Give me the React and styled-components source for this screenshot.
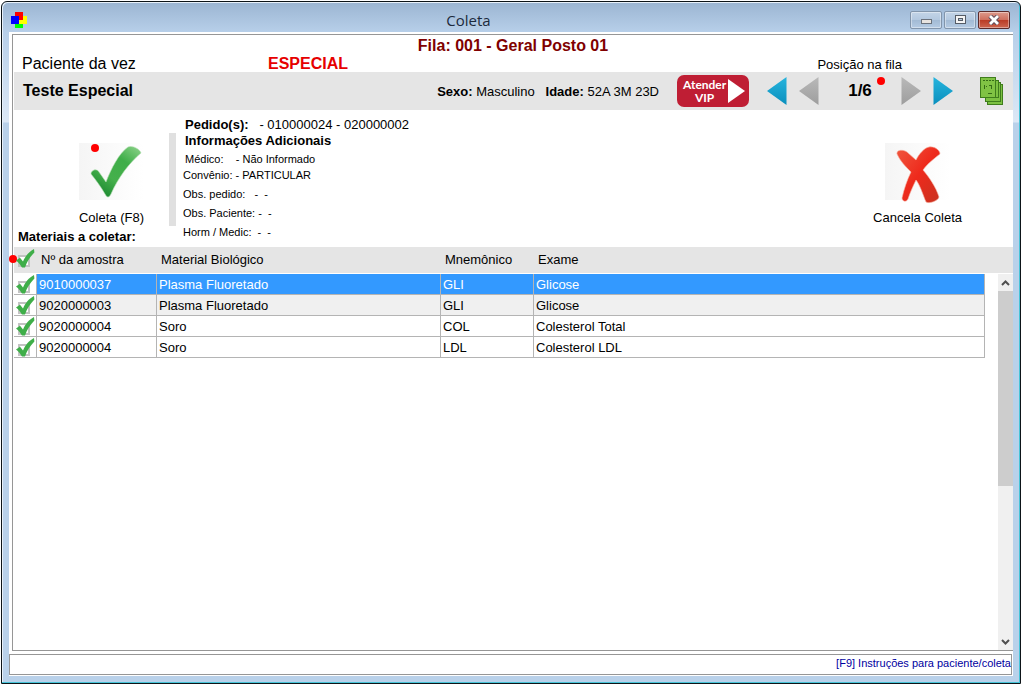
import React from 'react';
import { useState } from 'react';
import styled, { createGlobalStyle } from 'styled-components';

const exams = [
  { id: 1, sample: '9010000037', material: 'Plasma Fluoretado', code: 'GLI', exam: 'Glicose' },
  { id: 2, sample: '9020000003', material: 'Plasma Fluoretado', code: 'GLI', exam: 'Glicose', shaded: true },
  { id: 3, sample: '9020000004', material: 'Soro', code: 'COL', exam: 'Colesterol Total' },
  { id: 4, sample: '9020000004', material: 'Soro', code: 'LDL', exam: 'Colesterol LDL' },
];

function SampleCheck({ label, checked, onChange }) {
  return (
    <CheckLabel>
      <CheckInput
        type="checkbox"
        aria-label={label}
        checked={checked}
        onChange={onChange}
      />
      {checked && (
        <CheckMark viewBox="0 0 19 19" aria-hidden="true">
          <path
            d="M0 11.5 L4 8.8 L7 12.4 C9.5 7 12.5 3 18 0 L18.4 3.5 C14 8 11 12.5 9 18.6 L6 18.6 C4.5 16 2.5 13.5 0 11.5 Z"
            fill="#3fae49"
          />
        </CheckMark>
      )}
    </CheckLabel>
  );
}

function Arrow({ color, shade, dir, label }) {
  const id = `arrow-${label}`;
  return (
    <ArrowButton type="button" aria-label={label}>
      <svg width="20" height="28" viewBox="0 0 20 28">
        <defs>
          <linearGradient id={id} x1="0" y1="0" x2="0" y2="1">
            <stop offset="0" stopColor={color} />
            <stop offset="1" stopColor={shade} />
          </linearGradient>
        </defs>
        <path
          d={dir === 'left' ? 'M19.5 0 V28 L0 14 Z' : 'M0.5 0 V28 L20 14 Z'}
          fill={`url(#${id})`}
        />
      </svg>
    </ArrowButton>
  );
}

export default function App() {
  const [selected, setSelected] = useState(1);
  const [checked, setChecked] = useState([1, 2, 3, 4]);

  const toggle = (id) => {
    if (checked.includes(id)) {
      setChecked(checked.filter((el) => el !== id));
    } else {
      setChecked([...checked, id]);
    }
  };

  const allChecked = checked.length === exams.length;
  const toggleAll = () => {
    setChecked(allChecked ? [] : exams.map((el) => el.id));
  };

  return (
    <>
      <GlobalStyle />
      <Window>
        <TitleBar>
          <svg width="16" height="16" viewBox="0 0 16 16">
            <rect x="4" y="0" width="8" height="8" fill="#f00" />
            <rect x="8" y="4" width="8" height="8" fill="#ff0" />
            <rect x="4" y="8" width="8" height="8" fill="#0f0" />
            <rect x="0" y="4" width="8" height="8" fill="#00f" />
            <rect x="8" y="4" width="4" height="4" fill="#f00" />
            <rect x="8" y="8" width="4" height="4" fill="#ff0" />
          </svg>
          <Title>Coleta</Title>
          <WindowButtons>
            <WindowButton type="button" aria-label="Minimizar">
              <svg width="11" height="9" viewBox="0 0 11 9">
                <rect x="0.5" y="4.5" width="10" height="4" fill="#e8e4e0" stroke="#6b727c" />
              </svg>
            </WindowButton>
            <WindowButton type="button" aria-label="Maximizar">
              <svg width="11" height="9" viewBox="0 0 11 9">
                <rect x="0.5" y="0.5" width="10" height="8" fill="#f4f4f4" stroke="#555c66" />
                <rect x="3.5" y="3.5" width="4" height="2" fill="#b4c8dc" stroke="#555c66" />
              </svg>
            </WindowButton>
            <WindowButton type="button" aria-label="Fechar" $close>
              <svg width="12" height="10" viewBox="0 0 12 10">
                <path d="M2 1 L10 9 M10 1 L2 9" stroke="#5b4a5a" strokeWidth="4.6" />
                <path d="M2 1 L10 9 M10 1 L2 9" stroke="#fff" strokeWidth="2.8" />
              </svg>
            </WindowButton>
          </WindowButtons>
        </TitleBar>

        <Client>
          <Panel>
            <Queue>Fila: 001 - Geral Posto 01</Queue>
            <TopRow>
              <Turn>Paciente da vez</Turn>
              <Priority>ESPECIAL</Priority>
              <PositionLabel>Posição na fila</PositionLabel>
            </TopRow>

            <PatientBar>
              <PatientName>Teste Especial</PatientName>
              <PatientData>
                <b>Sexo:</b> Masculino{'   '}
                <b>Idade:</b> 52A 3M 23D
              </PatientData>
              <VipButton type="button">
                <VipText>
                  Atender
                  <br />
                  VIP
                </VipText>
                <svg width="17" height="24" viewBox="0 0 17 24">
                  <path d="M0 0 L17 12 L0 24 Z" fill="#fff" />
                </svg>
              </VipButton>
              <ArrowGroup>
                <Arrow dir="left" label="Primeiro" color="#27b4dd" shade="#0a8fbd" />
                <Arrow dir="left" label="Anterior" color="#b9b9b9" shade="#9d9d9d" />
              </ArrowGroup>
              <Position>
                1/6
                <Dot $top="-4px" $left="58px" />
              </Position>
              <ArrowGroup>
                <Arrow dir="right" label="Seguinte" color="#b9b9b9" shade="#9d9d9d" />
                <Arrow dir="right" label="Ultimo" color="#27b4dd" shade="#0a8fbd" />
              </ArrowGroup>
              <FormsButton type="button" aria-label="Fichas">
                <svg width="24" height="30" viewBox="0 0 24 30">
                  <g stroke="#3f7d1c" fill="#7cc142">
                    <rect x="7.5" y="8.5" width="15" height="20" />
                    <rect x="5.5" y="6.5" width="15" height="19" />
                    <rect x="3.5" y="4.5" width="15" height="17" />
                    <rect x="0.5" y="1.5" width="15" height="20" fill="#80c344" />
                  </g>
                  <path
                    d="M3 4.5h2M6 4.5h2M9 4.5h2M12 4.5h2M4.5 9v4M6 10.5h1M11.5 9v4M9 9.5h2M8 17.5h4"
                    stroke="#356c16"
                    fill="none"
                  />
                </svg>
              </FormsButton>
            </PatientBar>

            <Details>
              <LeftColumn>
                <ActionButton type="button">
                  <ActionPicture>
                    <svg width="65" height="57" viewBox="0 0 65 57">
                      <defs>
                        <linearGradient id="ok" x1="1" y1="0" x2="0.3" y2="1">
                          <stop offset="0" stopColor="#8fd48c" />
                          <stop offset="0.35" stopColor="#3fae49" />
                          <stop offset="0.7" stopColor="#45b04c" />
                          <stop offset="1" stopColor="#1d8a31" />
                        </linearGradient>
                      </defs>
                      <path
                        d="M12 31 C12 27 18 25 20 29 L27 39 C32 26 40 10 49 4 C53 2 61 6 62 10 C50 20 39 35 32 51 C30 55 28 55 26 51 C22 44 17 37 12 31 Z"
                        fill="url(#ok)"
                        stroke="#b5dfb4"
                        strokeWidth="0.6"
                      />
                    </svg>
                    <Dot $top="1px" $left="12px" />
                  </ActionPicture>
                  Coleta (F8)
                </ActionButton>
                <SectionTitle>Materiais a coletar:</SectionTitle>
              </LeftColumn>
              <Divider />
              <Info>
                <InfoMain>
                  <b>Pedido(s):</b>
                  {'   - 010000024 - 020000002'}
                </InfoMain>
                <InfoMain>
                  <b>Informações Adicionais</b>
                </InfoMain>
                <InfoLines>
                  <InfoLine $indent>{'Médico:    - Não Informado'}</InfoLine>
                  <InfoLine>{'Convênio: - PARTICULAR'}</InfoLine>
                  <InfoLine $tall>{'Obs. pedido:   -  -'}</InfoLine>
                  <InfoLine $tall>{'Obs. Paciente: -  -'}</InfoLine>
                  <InfoLine $tall>{'Horm / Medic:  -  -'}</InfoLine>
                </InfoLines>
              </Info>
              <RightColumn>
                <ActionButton type="button">
                  <ActionPicture>
                    <svg width="65" height="60" viewBox="0 0 65 60">
                      <defs>
                        <linearGradient id="no" x1="0" y1="0" x2="1" y2="1">
                          <stop offset="0" stopColor="#f0573f" />
                          <stop offset="0.5" stopColor="#ee2a1c" />
                          <stop offset="1" stopColor="#c8321f" />
                        </linearGradient>
                      </defs>
                      <path
                        d="M12 11 C11 7 18 6 22 9 L31 17 C34 11 39 5 44 4 C49 3 55 7 55 11 C50 15 42 21 38 27 C44 34 51 44 54 54 C53 58 44 61 41 59 C38 52 35 42 31 37 C28 43 25 50 23 56 C21 60 17 58 17 55 C19 46 22 37 26 29 C21 24 15 18 12 11 Z"
                        fill="url(#no)"
                        stroke="#f7b5a6"
                        strokeWidth="0.6"
                      />
                    </svg>
                  </ActionPicture>
                  Cancela Coleta
                </ActionButton>
              </RightColumn>
            </Details>

            <ListArea>
              <Dot $top="8px" $left="-5px" />
              <Table>
                <colgroup>
                  <col width="22" />
                  <col width="120" />
                  <col width="284" />
                  <col width="93" />
                  <col />
                </colgroup>
                <thead>
                  <tr>
                    <CheckHead>
                      <SampleCheck
                        label="Marcar todos"
                        checked={allChecked}
                        onChange={toggleAll}
                      />
                    </CheckHead>
                    <Head>Nº da amostra</Head>
                    <Head>Material Biológico</Head>
                    <Head>Mnemônico</Head>
                    <Head>Exame</Head>
                  </tr>
                </thead>
                <tbody>
                  {exams.map((el) => {
                    return (
                      <Row
                        key={el.id}
                        $selected={el.id === selected}
                        $shaded={el.shaded}
                        onClick={() => setSelected(el.id)}
                      >
                        <CheckCell>
                          <SampleCheck
                            label={el.exam}
                            checked={checked.includes(el.id)}
                            onChange={() => toggle(el.id)}
                          />
                        </CheckCell>
                        <Cell>{el.sample}</Cell>
                        <Cell>{el.material}</Cell>
                        <Cell>{el.code}</Cell>
                        <Cell>{el.exam}</Cell>
                      </Row>
                    );
                  })}
                </tbody>
              </Table>
              <ScrollBar>
                <ScrollButton type="button" aria-label="Acima">
                  <svg width="9" height="6" viewBox="0 0 9 6">
                    <path d="M1 5 L4.5 1.5 L8 5" stroke="#505050" strokeWidth="2" fill="none" />
                  </svg>
                </ScrollButton>
                <ScrollTrack>
                  <ScrollThumb />
                </ScrollTrack>
                <ScrollButton type="button" aria-label="Abaixo">
                  <svg width="9" height="6" viewBox="0 0 9 6">
                    <path d="M1 1 L4.5 4.5 L8 1" stroke="#505050" strokeWidth="2" fill="none" />
                  </svg>
                </ScrollButton>
              </ScrollBar>
            </ListArea>
          </Panel>
          <StatusBar>[F9] Instruções para paciente/coleta</StatusBar>
        </Client>
      </Window>
    </>
  );
}

const GlobalStyle = createGlobalStyle`
  * {
    box-sizing: border-box;
  }
  body {
    margin: 0;
    background: #fff;
    color: #000;
    font-family: 'Liberation Sans', Arial, sans-serif;
    font-size: 13px;
  }
  button {
    padding: 0;
    border: none;
    background: none;
    color: inherit;
    font: inherit;
    cursor: pointer;
  }
  svg {
    display: block;
  }
`;

const Window = styled.div`
  display: flex;
  flex-direction: column;
  min-height: calc(100vh - 2px);
  margin: 1px;
  padding: 1px 7px 7px;
  border: 1px solid #0d1418;
  border-radius: 6px 6px 0 0;
  background: linear-gradient(
    #9bb5d2 0,
    #b7cfe9 30px,
    #dce8f6 120px,
    #b9d1ea 121px
  );
  box-shadow: inset -1px -1px 0 #46c4d8, inset 1px 1px 0 #e8f1fa;
`;

const TitleBar = styled.div`
  display: flex;
  align-items: center;
  height: 29px;
  padding: 4px 3px 0 2px;
`;

const Title = styled.div`
  flex: 1;
  text-align: center;
  color: #1c2a3c;
  font-family: 'Open Sans', 'Segoe UI', sans-serif;
  font-size: 15px;
`;

const WindowButtons = styled.div`
  display: flex;
  gap: 2px;
`;

const WindowButton = styled.button`
  display: flex;
  justify-content: center;
  align-items: center;
  width: 32px;
  height: 18px;
  border: 1px solid ${({ $close }) => ($close ? '#5c2a2a' : '#8295ab')};
  border-radius: 2px;
  background: ${({ $close }) =>
    $close
      ? 'linear-gradient(#dd9a8c, #cf6f5e 48%, #b93a24 50%, #cd6650)'
      : 'linear-gradient(#c3d4e7, #b4c9e0 48%, #a2bad4 50%, #b5cbe3)'};
  box-shadow: inset 0 0 0 1px rgba(255, 255, 255, 0.4);
`;

const Client = styled.div`
  display: flex;
  flex-direction: column;
  flex: 1;
  padding-top: 2px;
  background: #fff;
`;

const Panel = styled.div`
  display: flex;
  flex-direction: column;
  flex: 1;
  margin-left: 3px;
  border: 1px solid #969696;
  border-right: none;
`;

const Queue = styled.div`
  line-height: 21px;
  text-align: center;
  color: #800000;
  font-size: 16px;
  font-weight: bold;
`;

const TopRow = styled.div`
  display: flex;
  align-items: center;
  height: 16px;
  padding-left: 9px;
`;

const Turn = styled.div`
  width: 246px;
  font-size: 16px;
`;

const Priority = styled.div`
  flex: 1;
  color: #e60000;
  font-size: 16px;
  font-weight: bold;
`;

const PositionLabel = styled.div`
  margin-right: 111px;
`;

const PatientBar = styled.div`
  display: flex;
  align-items: center;
  height: 38px;
  margin-left: 1px;
  padding: 0 9px;
  background: #e5e5e5;
`;

const PatientName = styled.div`
  flex: 1;
  font-size: 16px;
  font-weight: bold;
  line-height: 20px;
`;

const PatientData = styled.div`
  white-space: pre;
`;

const VipButton = styled.button`
  display: flex;
  justify-content: space-between;
  align-items: center;
  width: 72px;
  height: 32px;
  margin: 0 18px;
  padding: 0 4px 0 6px;
  border-radius: 7px;
  background: #bf1e34;
  color: #fff;
`;

const VipText = styled.span`
  font-family: Lato, 'Open Sans', sans-serif;
  font-size: 12px;
  font-weight: bold;
  line-height: 13px;
`;

const ArrowGroup = styled.div`
  display: flex;
  gap: 12px;
`;

const ArrowButton = styled.button``;

const Position = styled.div`
  position: relative;
  width: 82px;
  text-align: center;
  font-size: 17px;
  font-weight: bold;
`;

const FormsButton = styled.button`
  margin-left: 27px;
`;

/* red marker over a part of the screen */
const Dot = styled.span`
  position: absolute;
  top: ${({ $top }) => $top};
  left: ${({ $left }) => $left};
  width: 8px;
  height: 8px;
  border-radius: 50%;
  background: #f00;
`;

const Details = styled.div`
  display: flex;
  margin-left: 1px;
`;

const LeftColumn = styled.div`
  display: flex;
  flex-direction: column;
  width: 155px;
  padding: 33px 0 2px 4px;
`;

const RightColumn = styled.div`
  padding: 33px 51px 0 0;
`;

const ActionButton = styled.button`
  display: flex;
  flex-direction: column;
  align-items: center;
  gap: 10px;
  margin: 0 auto;
  line-height: 16px;

  ${LeftColumn} & {
    margin: 0 25px 0 auto;
  }
`;

const ActionPicture = styled.span`
  position: relative;
  display: block;
  height: 57px;
  background: linear-gradient(90deg, #f5f5f5, #fff);

  & > svg {
    overflow: visible;
  }
`;

const SectionTitle = styled.div`
  margin-top: 3px;
  line-height: 16px;
  font-weight: bold;
`;

const Divider = styled.div`
  width: 7px;
  margin: 23px 0 21px;
  background: #e0e0e0;
`;

const Info = styled.div`
  flex: 1;
  padding: 7px 0 0 7px;
  white-space: pre;
`;

const InfoMain = styled.div`
  padding-left: 2px;
  line-height: 16px;
`;

const InfoLines = styled.div`
  margin-top: 2px;
  font-size: 11px;
`;

const InfoLine = styled.div`
  padding-left: ${({ $indent }) => ($indent ? '2px' : '0')};
  line-height: ${({ $tall }) => ($tall ? '19px' : '16px')};

  &:nth-child(2) {
    margin-bottom: 2px;
  }
`;

const ListArea = styled.div`
  position: relative;
  display: flex;
  justify-content: space-between;
  align-items: flex-start;
  flex: 1;
  gap: 13px;
  margin-left: 1px;
  background: linear-gradient(#e5e5e5 26px, #fff 26px);
`;

const Table = styled.table`
  flex: 1;
  table-layout: fixed;
  border-collapse: separate;
  border-spacing: 0;
`;

const Head = styled.th`
  height: 27px;
  padding: 0 0 2px 5px;
  text-align: left;
  font-weight: normal;
`;

const CheckHead = styled.th`
  padding: 0 0 4px 2px;
`;

const Cell = styled.td`
  height: 21px;
  padding: 0 0 0 2px;
  border-left: 1px solid #b4b4b4;
  border-bottom: 1px solid #b4b4b4;

  &:last-child {
    border-right: 1px solid #b4b4b4;
  }
`;

const CheckCell = styled.td`
  padding: 0 0 0 2px;
  border-bottom: 1px solid #b4b4b4;
  background: #fff;
`;

const Row = styled.tr`
  ${Cell} {
    background: ${({ $selected, $shaded }) =>
      $selected ? '#3399ff' : $shaded ? '#f0f0f0' : '#fff'};
    color: ${({ $selected }) => ($selected ? '#fff' : '#000')};
  }
`;

const CheckLabel = styled.label`
  position: relative;
  display: flex;
  align-items: flex-end;
  width: 19px;
  height: 19px;
  padding: 0 0 1px 2px;
`;

const CheckInput = styled.input`
  appearance: none;
  width: 12px;
  height: 12px;
  margin: 0;
  border: 2px solid #c3c3c3;
  background: #fff;
`;

const CheckMark = styled.svg`
  position: absolute;
  top: 0;
  left: 0;
  width: 19px;
  height: 19px;
  pointer-events: none;
`;

const ScrollBar = styled.div`
  display: flex;
  flex-direction: column;
  align-self: stretch;
  width: 15px;
  margin-top: 27px;
  background: #f0f0f0;
`;

const ScrollButton = styled.button`
  display: flex;
  justify-content: center;
  align-items: center;
  height: 17px;
`;

const ScrollTrack = styled.div`
  flex: 1;
`;

const ScrollThumb = styled.div`
  height: 57%;
  background: #cdcdcd;
`;

const StatusBar = styled.div`
  height: 21px;
  margin: 3px 1px 1px 0;
  border: 1px solid #969696;
  line-height: 17px;
  text-align: right;
  color: #0000a0;
  font-size: 11px;
`;
